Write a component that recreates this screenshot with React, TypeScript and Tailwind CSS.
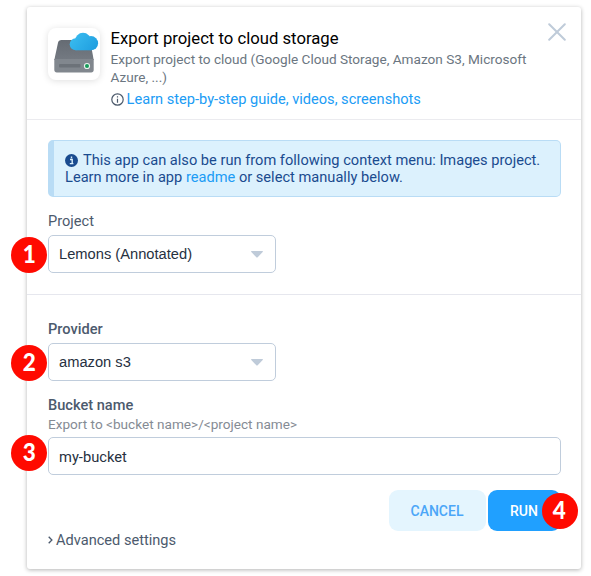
import React from "react";

function Badge({ n, className }: { n: number; className: string }) {
  return (
    <span
      className={`absolute z-10 flex h-9 w-9 items-center justify-center rounded-full bg-[#ff0a00] font-[Lato,sans-serif] text-[25px] leading-none font-black text-white ${className}`}
    >
      <span className="-mt-[3px] scale-x-90">{n}</span>
    </span>
  );
}

function Select({ value, badge }: { value: string; badge: number }) {
  return (
    <div className="relative flex h-[38px] w-[228px] items-center justify-between rounded-[5px] border border-[#c0cddc] bg-white pr-[12px] pl-[10px] font-['Liberation_Sans',Arial,sans-serif] text-[14.7px] text-[#27313f]">
      <Badge n={badge} className="top-[1px] -left-[38px]" />
      <span className="pt-[1px]">{value}</span>
      <svg width="12" height="7" viewBox="0 0 12 7" fill="#bfcbd9">
        <path d="M.7 0h10.6c.7 0 .9.6.4 1L6.7 6.2c-.4.4-1 .4-1.4 0L.3 1C-.2.6 0 0 .7 0Z" />
      </svg>
    </div>
  );
}

function DriveIcon() {
  return (
    <svg width="52" height="52" viewBox="0 0 52 52">
      <defs>
        <linearGradient id="top" x1="0" y1="0" x2="0" y2="1">
          <stop offset="0" stopColor="#656b73" />
          <stop offset="1" stopColor="#747a82" />
        </linearGradient>
        <linearGradient id="cloud" gradientUnits="userSpaceOnUse" x1="24" y1="5" x2="46" y2="23">
          <stop offset="0" stopColor="#3bbdf0" />
          <stop offset="1" stopColor="#209fe0" />
        </linearGradient>
      </defs>
      <path d="M13.500 12h25.700c2 0 3 1 3.400 2.700L45.700 32H6.300l3.700-17.300C10.400 13 11.500 12 13.500 12Z" fill="url(#top)" />
      <path d="M6.300 31h39.400v11c0 1.500-1 2.500-2.500 2.500H8.800c-1.500 0-2.500-1-2.500-2.500Z" fill="#81878e" />
      <rect x="11" y="36" width="21.500" height="3.500" rx="1" fill="#6c7279" />
      <circle cx="39" cy="38" r="3.100" fill="#e8f3ed" />
      <circle cx="39" cy="38" r="2" fill="#169b59" />
      <g fill="url(#cloud)">
        <circle cx="27.700" cy="16.300" r="6" />
        <circle cx="35" cy="12.800" r="8" />
        <circle cx="43" cy="15.200" r="7.100" />
        <path d="M27.700 14H43v8.300H27.700Z" />
      </g>
    </svg>
  );
}

export default function App() {
  return (
    <div className="h-[576px] w-[591px] overflow-hidden bg-white pt-[7px] pl-[27px] font-[Roboto,sans-serif]">
      <div className="h-[562px] w-[554px] rounded-[3px] bg-white shadow-[0_1px_4px_rgba(0,0,0,0.3)]">
        <header className="flex h-[113px] border-b border-[#ebebef] pt-[21px] pl-[21px]">
          <div className="h-[52px] w-[52px] shrink-0 rounded-[8px] bg-white shadow-[0_1px_7px_rgba(0,0,0,0.13)]">
            <DriveIcon />
          </div>
          <div className="ml-[10.600px] w-[430.400px] whitespace-nowrap">
            <h1 className="text-[16.700px] leading-[21px] text-black">Export project to cloud storage</h1>
            <p className="pt-[1px] text-[13.600px] leading-[18px] text-[#6b7681]">
              Export project to cloud (Google Cloud Storage, Amazon S3, Microsoft
              <br />
              Azure, ...)
            </p>
            <div className="mt-[3px] flex items-center text-[14.600px] leading-[20px] text-[#209cf5]">
              <svg className="mr-[3px]" width="13" height="13" viewBox="0 0 13 13" fill="none" stroke="#4b596b" strokeWidth="1.200">
                <circle cx="6.500" cy="6.500" r="5.700" />
                <path d="M6.500 5.700v4M6.500 3.200v1.300" />
              </svg>
              <a>Learn step-by-step guide, videos, screenshots</a>
            </div>
          </div>
          <svg className="-mt-[5px] ml-[7px]" width="18" height="18" viewBox="0 0 18 18" stroke="#bfcbd9" strokeWidth="2" strokeLinecap="round">
            <path d="m1.200 1.200 15.600 15.600M16.800 1.200 1.200 16.800" />
          </svg>
        </header>

        <section className="h-[175px] border-b border-[#e6e7ee] px-[21px] pt-5">
          <div className="h-[57px] w-[513px] rounded-[5px] border border-l-[6px] border-[#b9dcf5] bg-[#dcf1fd] pt-[11px] pl-[11px] text-[14.640px] leading-[17px] whitespace-nowrap text-[#1a4b8f]">
            <div className="flex items-center">
              <svg className="mr-[5px]" width="13" height="13" viewBox="0 0 13 13">
                <circle cx="6.500" cy="6.500" r="6.500" fill="#1a4b8f" />
                <path d="M5 5.500h2.200v4M4.800 9.600h3.600M6.500 2.500v1.700" stroke="#dcf1fd" strokeWidth="1.400" fill="none" />
              </svg>
              <span>This app can also be run from following context menu: Images project.</span>
            </div>
            <div>
              Learn more in app <a className="text-[#209cf5]">readme</a> or select manually below.
            </div>
          </div>
          <div className="mt-[15px] mb-[4px] text-[14.600px] leading-[19px] text-[#4c5a6d]">Project</div>
          <Select value="Lemons (Annotated)" badge={1} />
        </section>

        <section className="px-[21px] pt-[25px]">
          <div className="mb-[4px] text-[14.600px] leading-[19px] font-medium text-[#4c5a6d]">Provider</div>
          <Select value="amazon s3" badge={2} />
          <div className="mt-[14px] text-[14.600px] leading-[20px] font-medium text-[#4c5a6d]">Bucket name</div>
          <div className="text-[13.600px] leading-[18px] whitespace-nowrap text-[#858b94]">Export to &lt;bucket name&gt;/&lt;project name&gt;</div>
          <div className="relative mt-[4px] flex h-[38px] w-[513px] items-center rounded-[5px] border border-[#c0cddc] pl-[10px] text-[14.700px] text-[#27313f]">
            <Badge n={3} className="-top-[3px] -left-[38px]" />
            <span className="pt-[2px]">my-bucket</span>
          </div>
          <div className="mt-[15px] flex w-[512.500px] justify-end gap-[2px] text-[14px] font-medium">
            <div className="flex h-[41px] w-[97px] items-center justify-center rounded-[9px] bg-[#e4f5fe] pt-[2px] text-[#4ba6f8]">CANCEL</div>
            <div className="relative flex h-[41px] w-[73px] items-center justify-center rounded-[9px] bg-[#20a0ff] pt-[2px] text-white">
              RUN
              <Badge n={4} className="top-[3px] left-[54px]" />
            </div>
          </div>
          <div className="-mt-[1px] flex items-center text-[14.600px] leading-[20px] text-[#4c5a6d]">
            <svg className="mr-[3px]" width="5" height="8" viewBox="0 0 5 8" fill="none" stroke="#4c5a6d" strokeWidth="1.300">
              <path d="m.7.7 3.200 3.300L.7 7.300" />
            </svg>
            Advanced settings
          </div>
        </section>
      </div>
    </div>
  );
}
